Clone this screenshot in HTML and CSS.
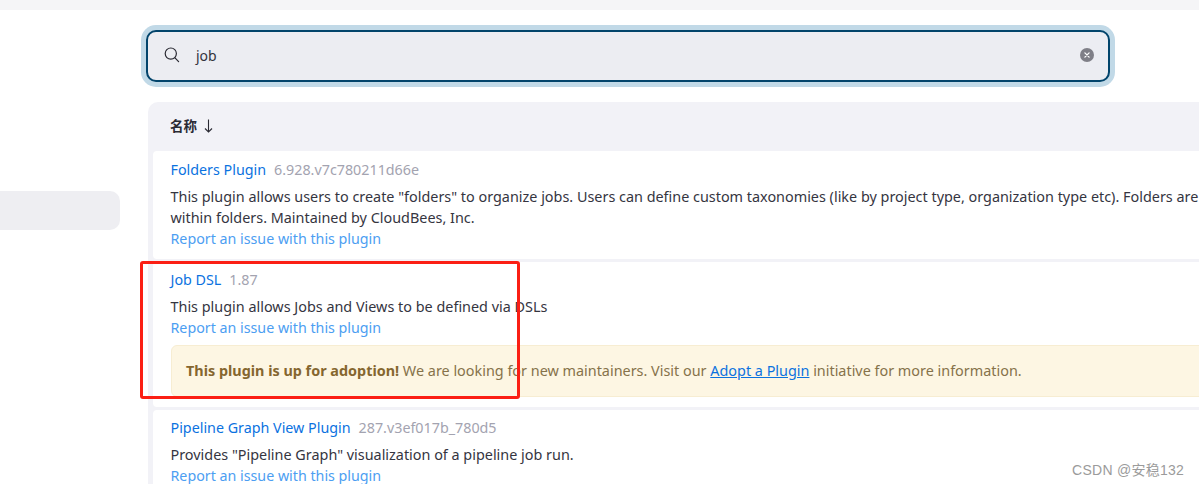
FILE: index.html
```html
<!DOCTYPE html>
<html lang="zh">
<head>
<meta charset="utf-8">
<title>Plugins</title>
<link rel="stylesheet" href="styles.css">
</head>
<body>
<div class="topbar"></div>
<div class="layout">
  <aside class="sidebar"><div class="side-item"></div></aside>
  <main class="main">
    <div class="search">
      <svg class="search-icon" width="16" height="16" viewBox="0 0 16 16" fill="none" stroke="#2a2a33" stroke-width="1.2"><circle cx="6.8" cy="6.6" r="5.6"/><path d="M11 10.8 14.6 14.6" stroke-linecap="round"/></svg>
      <span class="search-text">job</span>
      <svg class="clear-icon" width="14" height="14" viewBox="0 0 14 14"><circle cx="7" cy="7" r="7" fill="#7f7f87"/><path d="M4.9 4.9l4.2 4.2M9.1 4.9l-4.2 4.2" stroke="#fff" stroke-width="1.3" stroke-linecap="round"/></svg>
    </div>
    <section class="table">
      <div class="table-head"><span class="head-label">名称</span><svg class="head-arrow" width="9" height="14" viewBox="0 0 9 14" fill="none" stroke="#2a2a33" stroke-width="1.1"><path d="M4.5 0.5V13M1 9.5 4.5 13 8 9.5"/></svg></div>
      <article class="row row-one">
        <div class="title"><a class="name">Folders Plugin</a><span class="version">6.928.v7c780211d66e</span></div>
        <p class="desc">This plugin allows users to create "folders" to organize jobs. Users can define custom taxonomies (like by project type, organization type etc). Folders are nestable and you can define views within folders. Maintained by CloudBees, Inc.</p>
        <a class="report">Report an issue with this plugin</a>
      </article>
      <article class="row row-two">
        <div class="title"><a class="name">Job DSL</a><span class="version">1.87</span></div>
        <p class="desc">This plugin allows Jobs and Views to be defined via DSLs</p>
        <a class="report">Report an issue with this plugin</a>
        <div class="notice"><strong>This plugin is up for adoption!</strong> We are looking for new maintainers. Visit our <a class="notice-link">Adopt a Plugin</a> initiative for more information.</div>
      </article>
      <article class="row row-three">
        <div class="title"><a class="name">Pipeline Graph View Plugin</a><span class="version">287.v3ef017b_780d5</span></div>
        <p class="desc">Provides "Pipeline Graph" visualization of a pipeline job run.</p>
        <a class="report">Report an issue with this plugin</a>
      </article>
    </section>
  </main>
</div>
<div class="redbox"></div>
<div class="watermark">CSDN @安稳132</div>
</body>
</html>
```
FILE: styles.css
```css
* { box-sizing: border-box; }
html, body { margin: 0; height: 484px; overflow: hidden; background: #fff; }
body { font-family: "Noto Sans", "Noto Sans CJK SC", sans-serif; font-size: 14px; color: #2c2c36; position: relative; }
.topbar { height: 10px; background: #f5f5f7; }
.layout { display: flex; }
.sidebar { width: 148px; flex: none; padding-top: 181px; }
.side-item { width: 120px; height: 39px; background: #eeeef2; border-radius: 0 10px 10px 0; }
.main { flex: none; width: 1320px; padding-top: 20px; }
.search { margin-left: -2px; width: 964px; height: 52px; display: flex; align-items: center; padding: 0 14px 2px 16px; background: #ecedf2; border: 2px solid #02446b; border-radius: 10px; box-shadow: 0 0 0 5px #c1d9e7; }
.search-icon { flex: none; }
.search-text { flex: 1; margin-left: 16px; font-size: 14px; color: #33333d; }
.clear-icon { flex: none; }
.table { margin-top: 20px; background: #f2f2f7; border-radius: 10px 10px 0 0; padding: 0 0 0 5px; }
.table-head { height: 49px; display: flex; align-items: center; padding-left: 17px; color: #14141f; }
.head-label { font-size: 13.5px; font-weight: 600; margin-top: -4px; color: #2a2a33; }
.head-arrow { margin-left: 7px; margin-top: -1px; }
.row { background: #fff; padding: 8px 17px 0 17.5px; border-radius: 4px 0 0 4px; margin-bottom: 3px; }
.row-one { height: 108px; padding-top: 9px; }
.row-two { height: 145px; }
.row-three { height: 90px; }
.title { line-height: 20px; height: 20px; font-size: 14.3px; }
.name { color: #0b72df; }
.version { margin-left: 8px; color: #a3a3b0; }
.desc { margin: 6px 0 0; line-height: 21px; font-size: 14.4px; color: #35353f; }
.report { display: block; line-height: 21px; font-size: 14.25px; color: #4c9ef2; }
.notice { margin: 7px 0 0 .5px; height: 52px; display: block; line-height: 50px; padding-left: 14px; background: #fdf6e3; border: 1px solid #f7edd2; border-radius: 6px 0 0 6px; color: #86724a; font-size: 14.4px; }
.notice strong { color: #85662f; }
.notice-link { color: #0b72df; text-decoration: underline; }
.redbox { position: absolute; left: 140px; top: 261px; width: 380px; height: 138px; border: 3px solid #fb1f14; border-radius: 3px; }
.watermark { position: absolute; right: 15px; top: 459px; font-family: "Liberation Sans", "Noto Sans CJK SC", sans-serif; font-size: 14px; letter-spacing: .25px; color: #9b9b9b; }
```
